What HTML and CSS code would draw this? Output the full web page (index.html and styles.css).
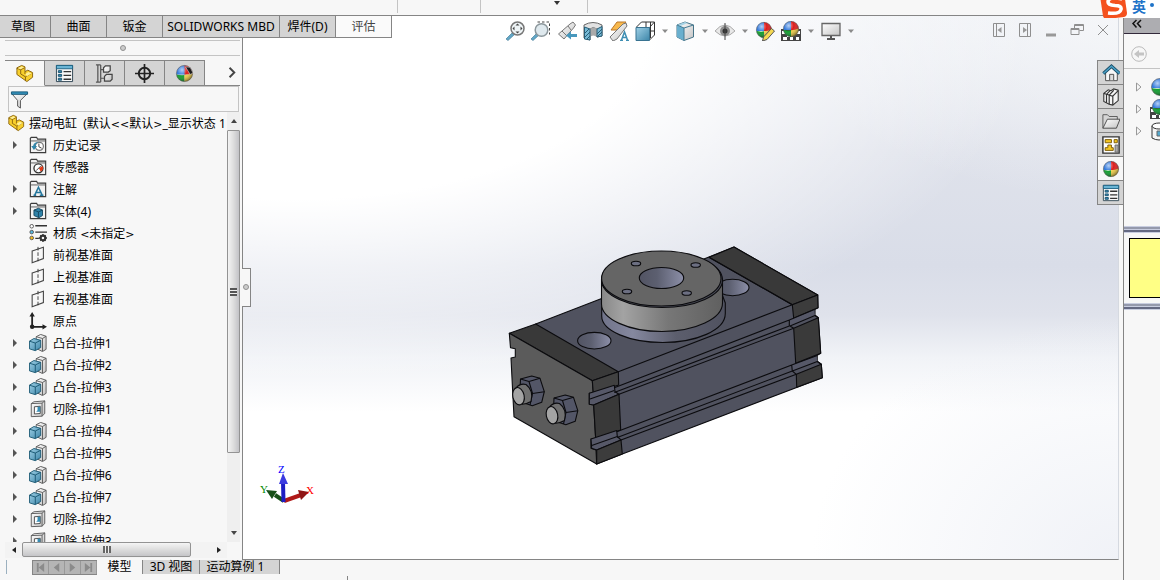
FILE: index.html
```html
<!DOCTYPE html>
<html lang="zh-CN">
<head>
<meta charset="utf-8">
<title>摆动电缸</title>
<link rel="stylesheet" href="styles.css">
</head>
<body>
<svg class="defs" aria-hidden="true">
  <defs>
    <linearGradient id="gBlue" x1="0" y1="0" x2="1" y2="1"><stop offset="0" stop-color="#9fd0e6"/><stop offset="1" stop-color="#3d86a9"/></linearGradient>
    <linearGradient id="gGrey" x1="0" y1="0" x2="1" y2="1"><stop offset="0" stop-color="#fff"/><stop offset="1" stop-color="#c4c4c4"/></linearGradient>
    <linearGradient id="gRim"><stop offset="0" stop-color="#888"/><stop offset=".18" stop-color="#a3a3a3"/><stop offset=".55" stop-color="#777"/><stop offset="1" stop-color="#606060"/></linearGradient>
    <linearGradient id="gBase"><stop offset="0" stop-color="#71748a"/><stop offset=".25" stop-color="#85889f"/><stop offset=".6" stop-color="#5c5e6d"/><stop offset="1" stop-color="#505260"/></linearGradient>
    <linearGradient id="gHole"><stop offset="0" stop-color="#525463"/><stop offset=".4" stop-color="#5c5f70"/><stop offset="1" stop-color="#8c8fa8"/></linearGradient>
    <radialGradient id="gShine" cx=".35" cy=".28" r=".75"><stop offset="0" stop-color="#fff" stop-opacity=".65"/><stop offset=".45" stop-color="#fff" stop-opacity="0"/><stop offset="1" stop-color="#000" stop-opacity=".45"/></radialGradient>
    <clipPath id="ballClip"><circle cx="10" cy="10" r="8.5"/></clipPath>
  </defs>
  <symbol id="part" viewBox="0 0 20 20"><path d="M2 7V4l5-2.500 3.500 1.500v5l3-1.500 5 2.500v5l-6 4.500L2 11Z" fill="#f8cf2c" stroke="#8a6410"/><path d="M2 4.500 6 6v4.500l5 3 6-3.500M6 6l4-2M11 13.500V18M10.500 8v2.500" fill="none" stroke="#8a6410"/><path d="M3 4.500 7 2.500l2.500 1-3.500 2ZM11 10.500l3-2 3.500 1.500-5 3Z" fill="#fff09a"/></symbol>
  <symbol id="props" viewBox="0 0 20 20"><path d="M1.500 1.500h17v17h-17Z" fill="#f8f8f8" stroke="#2e4552"/><path d="M1.500 1.500h17V5h-17Z" fill="#6ab4d4" stroke="#1d6384"/><path d="M3.500 7h3.500v2H3.500ZM3.500 11h3.500v2H3.500ZM3.500 15h3.500v2H3.500Z" fill="#3a8cb4" stroke="#17516f"/><path d="M9 8h8M9 12h8M9 16h8" stroke="#333" stroke-width="1.500"/></symbol>
  <symbol id="config" viewBox="0 0 20 20"><path d="M3 1v18M1 1h5M1 19h5M6 1v18M6 6h4M6 15h4" fill="none" stroke="#555" stroke-width="1.300"/><path d="M9 4l2-2h5v5l-2 1.500H9ZM10 13l2-2h6v5l-2 2h-6Z" fill="url(#gGrey)" stroke="#444" stroke-width="1.300"/></symbol>
  <symbol id="target" viewBox="0 0 20 20"><circle cx="10" cy="10" r="6" fill="none" stroke="#222" stroke-width="2"/><path d="M10 0v20M0 10h20" stroke="#222" stroke-width="1.800"/></symbol>
  <symbol id="ball" viewBox="0 0 20 20"><g clip-path="url(#ballClip)"><path d="M0 0h11v11H0Z" fill="#3078dc"/><path d="M10 0h10v11H10Z" fill="#dc1c1c"/><path d="M0 10.500q5 2 10 1V20H0Z" fill="#0c9c2a"/><path d="M10 11.500q5 0 10-3V20H10Z" fill="#f2cf45"/></g><circle cx="10" cy="10" r="8.500" fill="url(#gShine)" stroke="#555" stroke-width=".6"/></symbol>
  <symbol id="display" viewBox="0 0 20 20"><use href="#ball" width="20" height="20"/><path d="m11 3 5 8 3-1.500-3-6Z" fill="#1c1c1c" stroke="#ddd" stroke-width=".6"/></symbol>
  <symbol id="funnel" viewBox="0 0 20 20"><path d="M2 4l6 7v6l3 2v-8l7-7Z" fill="url(#gGrey)" stroke="#555"/><path d="M1.500 2h17v2.500h-17Z" fill="#3696c0" stroke="#175777"/></symbol>
  <symbol id="folder" viewBox="0 0 20 20"><path d="M1.500 18.500v-16l1-1h6l1 2h9v15Z" fill="#f2f2f2" stroke="#3c3c3c" stroke-width="1.300"/><path d="M1.500 5.500h17" stroke="#555"/></symbol>
  <symbol id="history" viewBox="0 0 20 20"><use href="#folder" width="20" height="20"/><circle cx="11.500" cy="11.500" r="4.500" fill="#fff" stroke="#777" stroke-width="1.300"/><path d="M11 8.500v3.500l3 1.500" fill="none" stroke="#333"/><path d="M2.500 11h2q1-4 6-4.500-3.500 2-3.500 4.500h2l-3.500 4.500Z" fill="#3087ac"/></symbol>
  <symbol id="sensor" viewBox="0 0 20 20"><use href="#folder" width="20" height="20"/><circle cx="10.500" cy="11.500" r="5" fill="#fff" stroke="#333" stroke-width="1.500"/><path d="M11 11.500 15 9q2 4-2 6Z" fill="#e23a16"/><path d="m8 14 5-5" stroke="#333"/></symbol>
  <symbol id="notes" viewBox="0 0 20 20"><use href="#folder" width="20" height="20"/><path d="M5 17h3M12 17h4M6.500 16.500 10.500 8l4 8.500M8 14h5" fill="none" stroke="#26779d" stroke-width="1.700"/></symbol>
  <symbol id="solids" viewBox="0 0 20 20"><use href="#folder" width="20" height="20"/><path d="m5.500 9 5-2 4.500 2v6l-4 2.500-5.500-2.500Z" fill="#2f83a9" stroke="#14455d"/><path d="m5.500 9 5 2 4.500-2M10.500 11v6" fill="none" stroke="#14455d"/></symbol>
  <symbol id="material" viewBox="0 0 20 20"><path d="M7 2h13M7 9h13M7 16h4" stroke="#333" stroke-width="1.600"/><g stroke="#555"><circle cx="3" cy="2.500" r="2" fill="#fff"/><circle cx="3" cy="9" r="2" fill="#55b7df"/><circle cx="3" cy="15.500" r="2" fill="#f4bd20"/></g><circle cx="15.500" cy="15.500" r="2.600" fill="none" stroke="#333" stroke-width="2.400"/><path d="M15.500 11v2M15.500 18v2M11 15.500h2M18 15.500h2M12.500 12.500l1 1M17.500 17.500l1 1M18.500 12.500l-1 1M13.500 17.500l-1 1" stroke="#333" stroke-width="1.500"/></symbol>
  <symbol id="plane" viewBox="0 0 20 20"><path d="M3.500 5.500 16 1.500v12.500L3.500 18.500Z" fill="none" stroke="#444" stroke-width="1.200"/><path d="M10 1v18" stroke="#333" stroke-dasharray="4 2"/></symbol>
  <symbol id="origin" viewBox="0 0 20 20"><path d="M3.500 3v13.500H17" fill="none" stroke="#222" stroke-width="2"/><path d="m3.500 0 3 5h-6ZM20 16.500l-5 3v-6Z" fill="#222"/><circle cx="3.500" cy="16.500" r="2.500" fill="#222"/></symbol>
  <symbol id="boss" viewBox="0 0 20 20"><path d="m8 3 5-2.500 6 2v14.500l-4 2.500L8 16Z" fill="url(#gGrey)" stroke="#555"/><path d="m8 3 7 2 4-2.500M15 5v14" fill="none" stroke="#555"/><path d="m.5 8 5-3 7.500 2v8L7 18.500l-6.500-2Z" fill="url(#gBlue)" stroke="#16556f"/><path d="m.5 8 6.500 2 6-3M7 10v8" fill="none" stroke="#16556f"/></symbol>
  <symbol id="cut" viewBox="0 0 20 20"><path d="m2.500 4 3-2 12-1v14l-3 3-12 .500Z" fill="url(#gGrey)" stroke="#555"/><path d="m2.500 4 12-.5V18M14.500 3.500l3-2.500" fill="none" stroke="#555"/><path d="M6 7.500 12.500 7v8L6 15.500Z" fill="#fff" stroke="#444"/><path d="M9.500 7.500h3v5.500H8l1.500-1.500Z" fill="#358bb2"/></symbol>
  <symbol id="zoomfit" viewBox="0 0 20 20"><path d="m1 18 7-7 2 2-7 6.500Z" fill="#62a7c7" stroke="#497f99" stroke-width=".7"/><circle cx="12.500" cy="7.500" r="6.500" fill="#eef4f6" stroke="#777" stroke-width="1.500"/><path d="m12.500 2.500 2 2h-4ZM12.500 12.500l2-2h-4ZM7.500 7.500l2-2v4ZM17.500 7.500l-2-2v4Z" fill="#444"/></symbol>
  <symbol id="zoomarea" viewBox="0 0 20 20"><path d="M6.500 1h12v12.500" fill="none" stroke="#444" stroke-dasharray="2.500 2"/><path d="m0 18 6-6 2 2-6 5.500Z" fill="#62a7c7" stroke="#497f99" stroke-width=".7"/><circle cx="10.500" cy="9" r="6.300" fill="#dfe9ee" stroke="#8c979c" stroke-width="1.500"/></symbol>
  <symbol id="prev" viewBox="0 0 20 20"><path d="M1.500 13 13 3l3-2 2.500 3-2 3L7 18Z" fill="url(#gGrey)" stroke="#777"/><path d="m11 5 3 4M5 10l5 5" stroke="#777"/><path d="m9 14.500 5-4v2.500h6v3h-6v2.500Z" fill="#4898bd"/></symbol>
  <symbol id="section" viewBox="0 0 20 20"><path d="M1 4q9-5 18 0v11l-5 1V8q-4-3-7 0v11l-6-2Z" fill="#e2e2e2" stroke="#666"/><path d="M7 8q4-3 7 0v8q-4-3-7 0Z" fill="#aaa"/><path d="m1.500 6 5.500 2v11l-5.500-1ZM14 8l5-2.500V15l-5 1Z" fill="#77bad6" stroke="#285d76"/><path d="m2 12 4-4M2 16l5-5M4 18l3-3M14 13l5-5M14 16l5-5" stroke="#285d76"/></symbol>
  <symbol id="annot" viewBox="0 0 20 20"><path d="M8 1h9l-5 6h4L5 15l3-6H2Z" fill="#f7b84c" stroke="#bb7628"/><path d="M1 16 14 3l3-1 1 3L8 18l-4 2Z" fill="url(#gGrey)" stroke="#777"/><path d="M11 19.500h3M17 19.500h3M12.500 19l3-8 3 8M13 16.500h5" fill="none" stroke="#3f8fb3" stroke-width="1.500"/></symbol>
  <symbol id="orient" viewBox="0 0 20 20"><path d="m1.500 6 5-5h13v13l-5 5M11 1v5M1.500 6.500h13M14.500 6.500l5-5.500M14.500 10h5M15.500 1v16" fill="none" stroke="#333"/><path d="M1 6.500h13.500v13H1Z" fill="url(#gBlue)" stroke="#397391"/></symbol>
  <symbol id="style" viewBox="0 0 20 20"><path d="m2 4 8-3 8.500 3v12L9 19.500 2 16Z" fill="url(#gGrey)" stroke="#467488"/><path d="m2 4 7 3v12.500L2 16Z" fill="#69afce"/><path d="m2 4 8-3 2.500 1L5 5.200Z" fill="#a6d2e4"/><path d="M2 4l7 3 9.500-3M9 7v12.500" fill="none" stroke="#457b93"/></symbol>
  <symbol id="eye" viewBox="0 0 20 20"><path d="M0 10q10-12 20 0-10 10-20 0Z" fill="#e8e8e8" stroke="#aaa"/><circle cx="10" cy="10" r="5" fill="#8c8c8c"/><circle cx="10" cy="10" r="2.500" fill="#333"/><path d="M10 2v17" stroke="#444"/></symbol>
  <symbol id="appear" viewBox="0 0 20 20"><use href="#ball" width="18" height="18"/><path d="m8.500 16 8-8.500 3 2.500-7.500 8.500-4.500 1.500Z" fill="#f6d951" stroke="#555"/></symbol>
  <symbol id="scene" viewBox="0 0 20 20"><path d="M0 8h20v12H0Z" fill="#444"/><path d="M2 16h4v3H2ZM9 16h3v3H9ZM15 16h3v3h-3ZM1 10h3v3H1ZM16 10h3v3h-3ZM6 14h3v2H6Z" fill="#fff"/><use href="#ball" x="1" y="-1" width="18" height="18"/></symbol>
  <symbol id="monitor" viewBox="0 0 20 20"><path d="M1 2.500h18v12H1Z" fill="url(#gGrey)" stroke="#666" stroke-width="1.300"/><path d="M10 15v3M6 18h8" stroke="#555" stroke-width="2"/></symbol>
  <symbol id="caret" viewBox="0 0 8 20"><path d="M1 8.500h6l-3 3.500Z"/></symbol>
  <symbol id="home" viewBox="0 0 20 20"><path d="M4 9v9.500h13V9l-6.500-6Z" fill="#f7f7f7" stroke="#444"/><path d="M8.500 18V11.500H13V18" fill="#ddd" stroke="#444"/><path d="m1.500 10.500 9-8 9 8" fill="none" stroke="#1b4e68" stroke-width="3.600"/><path d="m1.500 10.500 9-8 9 8" fill="none" stroke="#4ba0c5" stroke-width="1.700"/></symbol>
  <symbol id="books" viewBox="0 0 20 20"><path d="m2 6 5-4 3 1 3-2 5 1.500V14l-6 5-4-1-6-3Z" fill="#f4f4f4" stroke="#333" stroke-width="1.200"/><path d="m2 6 3 1v9.500M5 7l4-4M5.500 7 8 8v10M8 8l5-5.500M8 8l4 1v10M12 9l6-6" fill="none" stroke="#333" stroke-width="1.300"/></symbol>
  <symbol id="open" viewBox="0 0 20 20"><path d="M1 18V3h5l2 2h9v5" fill="#d6d6d6" stroke="#555"/><path d="m1 18 5-10h14l-4 10Z" fill="url(#gGrey)" stroke="#444"/></symbol>
  <symbol id="palette" viewBox="0 0 20 20"><path d="M1 1h18v18H1Z" fill="#fff" stroke="#333" stroke-width="1.600"/><path d="M3.500 4h7v3.500h-7ZM13.500 4H17v3.500h-3.500ZM3.500 13h3v-3h4v3h2v3h-9Z" fill="#f5c722" stroke="#745500"/><path d="M14.500 10H18v8h-3.500Z" fill="#aaa" stroke="#666"/></symbol>
  <symbol id="drum" viewBox="0 0 20 20"><path d="M2 5v12q7 4 14 0V5" fill="#f5f5f5" stroke="#333"/><ellipse cx="9" cy="5" rx="7" ry="3" fill="#fff" stroke="#333"/><path d="M7 10h6v5H7Z" fill="#54a9ce" stroke="#666"/></symbol>
</svg>

<div class="app">
  <header class="ribbon">
    <span class="ribbon-group"></span>
    <span class="ribbon-group narrow"></span>
    <span class="ribbon-group wide"><svg class="mini-caret" viewBox="0 0 6 4"><path d="M0 0h6L3 4Z"/></svg></span>
  </header>

  <nav class="command-tabs">
    <button class="sketch">草图</button><button>曲面</button><button>钣金</button><button class="mbd">SOLIDWORKS MBD</button><button>焊件(D)</button><button class="active">评估</button>
  </nav>

  <aside class="side">
    <div class="grip"><i class="dot"></i></div>
    <div class="side-tabs">
      <button class="active" aria-label="设计树"><svg><use href="#part"/></svg></button>
      <button aria-label="属性"><svg><use href="#props"/></svg></button>
      <button aria-label="配置"><svg><use href="#config"/></svg></button>
      <button aria-label="尺寸"><svg><use href="#target"/></svg></button>
      <button aria-label="外观"><svg><use href="#display"/></svg></button>
      <button class="more" aria-label="更多"><svg viewBox="0 0 20 20"><path d="m9 5 5 5-5 5"/></svg></button>
    </div>
    <label class="filter"><svg><use href="#funnel"/></svg><input type="text" aria-label="过滤"></label>
    <div class="tree-area">
      <ul class="tree">
        <li class="root"><svg><use href="#part"/></svg><span>摆动电缸&nbsp; (默认<b>&lt;&lt;</b>默认<b>&gt;</b>_显示状态 1</span></li>
        <li class="has"><svg><use href="#history"/></svg><span>历史记录</span></li>
        <li><svg><use href="#sensor"/></svg><span>传感器</span></li>
        <li class="has"><svg><use href="#notes"/></svg><span>注解</span></li>
        <li class="has"><svg><use href="#solids"/></svg><span>实体(4)</span></li>
        <li><svg><use href="#material"/></svg><span>材质 <b>&lt;</b>未指定<b>&gt;</b></span></li>
        <li><svg><use href="#plane"/></svg><span>前视基准面</span></li>
        <li><svg><use href="#plane"/></svg><span>上视基准面</span></li>
        <li><svg><use href="#plane"/></svg><span>右视基准面</span></li>
        <li><svg><use href="#origin"/></svg><span>原点</span></li>
        <li class="has"><svg><use href="#boss"/></svg><span>凸台-拉伸1</span></li>
        <li class="has"><svg><use href="#boss"/></svg><span>凸台-拉伸2</span></li>
        <li class="has"><svg><use href="#boss"/></svg><span>凸台-拉伸3</span></li>
        <li class="has"><svg><use href="#cut"/></svg><span>切除-拉伸1</span></li>
        <li class="has"><svg><use href="#boss"/></svg><span>凸台-拉伸4</span></li>
        <li class="has"><svg><use href="#boss"/></svg><span>凸台-拉伸5</span></li>
        <li class="has"><svg><use href="#boss"/></svg><span>凸台-拉伸6</span></li>
        <li class="has"><svg><use href="#boss"/></svg><span>凸台-拉伸7</span></li>
        <li class="has"><svg><use href="#cut"/></svg><span>切除-拉伸2</span></li>
        <li class="has"><svg><use href="#cut"/></svg><span>切除-拉伸3</span></li>
      </ul>
      <div class="vbar"><i class="arrow up"></i><div class="vtrack"><div class="vthumb"><i></i></div></div><i class="arrow down"></i></div>
      <div class="hbar"><i class="arrow left"></i><div class="htrack"><div class="hthumb"><i></i></div></div><i class="arrow right"></i></div>
    </div>
    <button class="splitter" aria-label="折叠"><i class="dot"></i></button>
  </aside>

  <main class="viewport">
    <svg class="model" viewBox="500 240 330 230" role="img" aria-label="模型">
      <g stroke="#0b0b0e" stroke-width="1.100" stroke-linejoin="round">
        <path d="M535.700 324 709 257 734 247 817.700 295l.3 12.700-3 1.500v6l3.300 2.500 2.400 35.600-3.500 2v6l4.100 3 1 13.400L622.300 454l-25.600 10Z" fill="#50525f"/>
        <path d="m709 257.300 25-10.300 83.700 48-25.400 9.700Z" fill="#393939"/>
        <path d="m792.300 304.700 25.400-9.700.3 12.700-24.300 10.600Z" fill="#3c3c3c"/>
        <path d="m789.300 320 25-10 .7 6-25 10Z" fill="#565868" stroke="none"/>
        <path d="m793.700 328.300 24.600-10.600 2.400 35.600-25 10Z" fill="#3a3a3a"/>
        <path d="m791.700 365 25-9 .5 6-25 9Z" fill="#565868" stroke="none"/>
        <path d="m796.300 374.300 25-10 1 13.400-25.600 9.600Z" fill="#3c3c3c"/>
        <path d="M509.300 333.300 535.700 324l82.600 47.700-26 9Z" fill="#393939"/>
        <path d="m509.300 333.300 83 47.400 1 12.600h-4v11l4.400.700 2 34.300-4.700-.3v9.300l5 1.700.7 14-82.700-47.300-1.300-24.700-1.700-34 4.300-1v-8.300l-4.800-1Z" fill="#5b5b5b"/>
        <path d="m592.300 380.700 26-9 .4 13.300-25.400 8.300Z" fill="#414141"/>
        <path d="m589.300 393.300 25-8 .7 6.500 4 2.500-25.300 10.700-4.400-.7Z" fill="#565868"/>
        <path d="m593.700 405 25.300-10.700 1.700 35.700-25 9.300Z" fill="#393939"/>
        <path d="m591 439 25.700-8.500.6 6 3.700 3.500-24.300 10-5-1.700Z" fill="#565868"/>
        <path d="m596.700 450 24.300-10 1.300 14-25.600 10Z" fill="#3c3c3c"/>
        <g fill="none"><path d="m618.300 371.700 174-67M614.300 387.700l175-67.700v6l-175 66.500M619 394.300l174.700-66M590 399l24.300-8.500M616.700 431.700l175-66.700.6 6-175 66.500M621 440l175.300-65.700M591.700 445.500l25.600-9M789.300 320l25-10.500M790 326l25-10.500 3.300 2.200M791.700 365l25.500-9.500M792.300 371l25-9.500 4 2.800M790 326l3.700 2.300M792.300 371l4 3.300M709 257.300l83.300 47.400"/></g>
        <ellipse cx="594.300" cy="340.700" rx="16.700" ry="8.300" fill="url(#gHole)"/>
        <ellipse cx="732.500" cy="287.500" rx="16.500" ry="8.200" fill="url(#gHole)"/>
        <path d="M601.700 306v10c0 15 28 26.500 61 26.500s62.600-12 62.600-29V303l-3-8Z" fill="url(#gBase)"/>
        <path d="M601.500 279v25c0 15 27 27.500 60.500 27.500s60.500-13 60.500-28.500V279Z" fill="url(#gRim)"/>
        <ellipse cx="662" cy="280" rx="60.500" ry="27.500" fill="#4b4d59"/>
        <ellipse cx="661.300" cy="278.500" rx="59.700" ry="27.500" fill="#656565"/>
        <ellipse cx="661.500" cy="278" rx="22.200" ry="10.500" fill="url(#gHole)"/>
        <g fill="#6c6f82"><ellipse cx="636" cy="263.500" rx="4.700" ry="2.300"/><ellipse cx="627" cy="291.500" rx="4.700" ry="2.300"/><ellipse cx="695.700" cy="265" rx="4.700" ry="2.300"/><ellipse cx="686.700" cy="293" rx="4.700" ry="2.300"/></g>
        <g id="bolt"><path d="m520.500 379 11.200-3 8.300 2.300 4.300 13.400-2.600 10.600-9.400 3.400-7.300-2.400-5-12Z" fill="#535667"/><path d="m520.500 379 8.500 2.500 3.500 12-2.500 11.500M529 381.500l11-3.200M532.500 393.500l11.800-1.800" fill="none"/><path d="M516 388q4-5 10-3.500 8 6 5 17-5 3-10 3Z" fill="#707070"/><ellipse cx="518.500" cy="396.200" rx="5.700" ry="8.800" fill="#a4a4a4" transform="rotate(-12 518.500 396.200)"/></g>
        <use href="#bolt" x="33.500" y="19"/>
      </g>
    </svg>
    <div class="viewbar">
      <div class="tools">
        <button aria-label="整屏显示"><svg><use href="#zoomfit"/></svg></button>
        <button aria-label="局部放大"><svg><use href="#zoomarea"/></svg></button>
        <button aria-label="上一视图"><svg><use href="#prev"/></svg></button>
        <button aria-label="剖面视图"><svg><use href="#section"/></svg></button>
        <button aria-label="动态注解"><svg><use href="#annot"/></svg></button>
        <button aria-label="视图定向"><svg><use href="#orient"/></svg></button>
        <svg class="caret"><use href="#caret"/></svg>
        <button aria-label="显示样式"><svg><use href="#style"/></svg></button>
        <svg class="caret"><use href="#caret"/></svg>
        <button aria-label="隐藏显示"><svg><use href="#eye"/></svg></button>
        <svg class="caret"><use href="#caret"/></svg>
        <button aria-label="编辑外观"><svg><use href="#appear"/></svg></button>
        <button aria-label="应用布景"><svg><use href="#scene"/></svg></button>
        <svg class="caret"><use href="#caret"/></svg>
        <button aria-label="视图设定"><svg><use href="#monitor"/></svg></button>
        <svg class="caret"><use href="#caret"/></svg>
      </div>
      <div class="window-controls">
        <button aria-label="左侧"><svg viewBox="0 0 14 14"><path d="M1.500.5h11v13h-11ZM4.500.5v13"/><path class="solid" d="M9.500 4v6l-4-3Z"/></svg></button>
        <button aria-label="右侧"><svg viewBox="0 0 14 14"><path d="M1.500.5h11v13h-11ZM9.500.5v13"/><path class="solid" d="M5 4v6l4-3Z"/></svg></button>
        <button aria-label="最小化"><svg viewBox="0 0 14 14"><path class="solid" d="M2 10.500h10v3H2Z"/></svg></button>
        <button aria-label="还原"><svg viewBox="0 0 14 14"><path d="M1 5.500h8v6H1ZM4.500 5V1.500h9v6H9.500M4.500 2.500h9M1 6.500h8"/></svg></button>
        <button aria-label="关闭"><svg viewBox="0 0 14 14"><path d="m2 2 10 10M12 2 2 12"/></svg></button>
      </div>
    </div>
    <svg class="triad" viewBox="258 460 60 46" role="img" aria-label="坐标系">
      <path d="m284 501 17-6" stroke="#b01818" stroke-width="4"/><path d="m298 490 11 2-8 8Z" fill="#8e1616"/>
      <path d="m284 501-9-6" stroke="#174f17" stroke-width="4"/><path d="m266 490 11 1-5 8Z" fill="#174f17"/>
      <path d="M283.500 502 283 482" stroke="#1d1dc4" stroke-width="4"/><path d="m283 473 5 11h-9Z" fill="#3b3be0"/>
      <text x="278" y="473" fill="#00f">Z</text><text x="260" y="493" fill="#080">Y</text><text x="306" y="494" fill="#f00">X</text>
    </svg>
  </main>

  <aside class="task">
    <div class="task-tabs">
      <button aria-label="资源"><svg><use href="#home"/></svg></button>
      <button aria-label="设计库"><svg><use href="#books"/></svg></button>
      <button aria-label="文件"><svg><use href="#open"/></svg></button>
      <button aria-label="视图调色板"><svg><use href="#palette"/></svg></button>
      <button class="active" aria-label="外观布景"><svg><use href="#ball"/></svg></button>
      <button aria-label="自定义属性"><svg><use href="#props"/></svg></button>
    </div>
    <div class="task-head"><svg viewBox="0 0 10 8"><path d="M4.500 0 1 3.500l3.500 4M9 0 5.500 3.500l3.500 4"/></svg></div>
    <div class="task-nav"><svg viewBox="0 0 16 16"><circle cx="8" cy="8" r="7.300"/><path class="solid" d="m3 8 5-4v2.500h5v3H8V12Z"/></svg></div>
    <ul class="task-list">
      <li><svg class="expand" viewBox="0 0 6 10"><path d="M.5 1v8L5 5Z"/></svg><svg><use href="#ball"/></svg></li>
      <li><svg class="expand" viewBox="0 0 6 10"><path d="M.5 1v8L5 5Z"/></svg><svg><use href="#scene"/></svg></li>
      <li><svg class="expand" viewBox="0 0 6 10"><path d="M.5 1v8L5 5Z"/></svg><svg><use href="#drum"/></svg></li>
    </ul>
    <div class="preview"><div class="swatch"></div></div>
  </aside>

  <footer class="bottom">
    <div class="playback"><button aria-label="首页"><svg viewBox="0 0 12 12"><path d="M2 1h2v10H2ZM10 1v10L4 6Z"/></svg></button><button aria-label="上一页"><svg viewBox="0 0 12 12"><path d="M9 1v10L3 6Z"/></svg></button><button aria-label="下一页"><svg viewBox="0 0 12 12"><path d="M3 1v10l6-5Z"/></svg></button><button aria-label="末页"><svg viewBox="0 0 12 12"><path d="M8 1h2v10H8ZM2 1v10l6-5Z"/></svg></button></div>
    <nav class="doc-tabs"><button class="active">模型</button><button>3D 视图</button><button class="motion">运动算例 1</button></nav>
    <i class="status-mark"></i>
  </footer>

  <div class="ime">
    <svg viewBox="0 0 28 20"><path d="M0-4 24-8 27 13q0 3-3 4L7 19q-3 0-4-3Z" fill="#f4511e"/><path d="M22-1Q8-4 8 2q0 3 7 3.500 7 0 6 4-1 5-13 3.500" fill="none" stroke="#fff" stroke-width="3.500"/></svg>
    <span>英</span><i></i>
  </div>
</div>
</body>
</html>
```

FILE: styles.css
```css
* { box-sizing: border-box; }
body { margin: 0; font: 12px/22px "Noto Sans", "Noto Sans CJK SC", sans-serif; color: #000; background: #f7f7f7; }
button { margin: 0; padding: 0; border: 0; background: none; font: inherit; color: inherit; }
ul { margin: 0; padding: 0; list-style: none; }
svg { display: block; flex: none; }
.defs { position: absolute; width: 0; height: 0; }

.app { position: relative; display: grid; grid-template: 15px 23px minmax(0, 1fr) 20px / 243px minmax(0, 1fr) 41px; height: 100vh; overflow: hidden; }

.ribbon { grid-area: 1 / 1 / 2 / -1; display: flex; border-bottom: 1px solid #858585; height: 16px; }
.ribbon-group { width: 398px; height: 13px; border-right: 1px solid #c4c4c4; }
.ribbon-group.narrow { width: 83px; }
.ribbon-group.wide { width: 107px; padding: 1px 0 0 73px; }
.mini-caret { width: 6px; height: 4px; fill: #333; }

.command-tabs { grid-area: 2 / 1 / 3 / 3; z-index: 2; justify-self: start; display: flex; border-top: 1px solid #858585; border-bottom: 1px solid #858585; }
.command-tabs button { width: 56px; height: 21px; background: #d4d4d4; border-right: 1px solid #858585; white-space: nowrap; }
.command-tabs .sketch { width: 51px; padding-right: 4px; }
.command-tabs .mbd { width: 117px; }
.command-tabs .active { background: #fafafa; color: #444; }

.side { grid-area: 3 / 1 / 4 / 2; position: relative; display: flex; flex-direction: column; padding: 2px 2px 2px 5px; border-right: 1px solid #858585; min-height: 0; }
.grip { height: 16px; border-top: 1px solid #c4c4c4; border-bottom: 1px solid #c4c4c4; display: grid; place-items: center; flex: none; }
.dot { width: 6px; height: 6px; border: 1px solid #919191; border-radius: 50%; background: #ccc; }
.side-tabs { display: flex; margin-top: 4px; height: 26px; border-bottom: 1px solid #858585; flex: none; }
.side-tabs button { width: 40px; height: 26px; border: 1px solid #858585; border-left: 0; background: #d4d4d4; display: grid; place-items: center; }
.side-tabs svg { width: 19px; height: 19px; }
.side-tabs .active { background: #f7f7f7; border-bottom-color: #f7f7f7; }
.side-tabs .more { flex: 1; height: 24px; border: 0; background: none; justify-items: end; }
.more path { fill: none; stroke: #444; stroke-width: 2; }
.filter { display: flex; align-items: center; margin: 0 1px 0 3px; padding-left: 1px; height: 26px; border: 1px solid #c4c4c4; flex: none; }
.filter svg { width: 19px; height: 19px; }
.filter input { flex: 1; min-width: 0; border: 0; background: none; outline: 0; }

.tree-area { flex: 1; min-height: 0; display: grid; grid-template: minmax(0, 1fr) 16px / minmax(0, 1fr) 13px; }
.tree { overflow: hidden; }
.tree li { display: flex; align-items: center; gap: 6px; height: 22px; padding-left: 24px; white-space: nowrap; position: relative; }
.tree svg { width: 18px; height: 18px; }
.tree span { padding-top: 2px; }
.tree b { font: 11px/12px "DejaVu Sans", sans-serif; }
.tree .root { padding-left: 2px; gap: 4px; }
.tree .has::before { content: ""; position: absolute; left: 8px; top: 7px; border: solid transparent; border-width: 4px 0 4px 4px; border-left-color: #555; }
.vbar { display: flex; flex-direction: column; background: #efefef; }
.arrow { width: 13px; height: 18px; display: grid; place-items: center; flex: none; }
.arrow::before { content: ""; border: 3px solid transparent; }
.up::before { border-top: 0; border-bottom: 4px solid #444; }
.down::before { border-bottom: 0; border-top: 4px solid #444; }
.left::before { border-left: 0; border-right: 4px solid #222; }
.right::before { border-right: 0; border-left: 4px solid #222; }
.vtrack { flex: 1; min-height: 0; }
.vthumb { height: 82%; border: 1px solid #939393; border-radius: 1px; background: linear-gradient(90deg, #f3f3f3, #ddd 50%, #c2c2c6); display: grid; place-items: center; }
.vthumb i { width: 7px; height: 8px; background: repeating-linear-gradient(#555 0 2px, #eee 2px 3px); }
.hbar { display: flex; background: #f3f3f3; grid-column: 1; }
.hbar .arrow { width: 17px; height: 16px; }
.htrack { flex: 1; }
.hthumb { width: 90%; height: 15px; border: 1px solid #939393; border-radius: 2px; background: linear-gradient(#f5f5f5, #ddd 50%, #c5c5c8); display: grid; place-items: center; }
.hthumb i { width: 8px; height: 7px; background: repeating-linear-gradient(90deg, #666 0 2px, #eee 2px 3px); }
.splitter { position: absolute; left: 100%; top: 44%; width: 9px; height: 39px; border: 1px solid #858585; border-left: 0; background: #f7f7f7; z-index: 3; display: grid; place-items: center; }

.viewport { grid-area: 2 / 2 / 4 / 3; position: relative; margin-top: 1px; overflow: hidden; border-bottom: 1px solid #858585; border-right: 1px solid #d5d9e0;
  background:
    radial-gradient(ellipse 84% 66% at 6% 2%, #fff 0, #fff 48%, rgba(255,255,255,0) 100%),
    radial-gradient(ellipse 38% 34% at 100% 0, rgba(247,248,250,.8) 0, rgba(247,248,250,0) 100%),
    radial-gradient(ellipse 35% 45% at 100% 100%, #f0f2f7 0, rgba(240,242,247,0) 100%),
    linear-gradient(#eceff4 0, #dfe2eb 25%, #d9dde8 46%, #dfe2eb 55%, #f1f3f7 63%, #fff 73%, #fff 100%); }
.model { position: absolute; left: 257px; top: 224px; width: 330px; height: 230px; }
.triad { position: absolute; left: 15px; bottom: 53px; width: 60px; height: 46px; overflow: visible; font: 11px "Liberation Serif", serif; }
.viewbar { position: relative; display: flex; justify-content: space-between; padding: 5px 8px 0 262px; }
.tools { display: flex; gap: 6px; }
.tools button, .tools button svg { width: 20px; height: 20px; }
.tools .caret { width: 8px; height: 20px; fill: #8b8b8b; }
.window-controls { display: flex; gap: 12px; padding-top: 2px; }
.window-controls button { height: 14px; }
.window-controls svg { width: 14px; height: 14px; fill: none; stroke: #8f8f8f; }
.window-controls .solid, .task-nav .solid { fill: #999; stroke: none; }

.task { grid-area: 2 / 3 / -1 / 4; position: relative; margin-left: 4px; border-left: 1px solid #858585; display: flex; flex-direction: column; z-index: 1; }
.task-head { background: #adadb1; border-bottom: 1px solid #32283a; padding: 5px 8px; height: 19px; }
.task-head svg { width: 10px; height: 8px; overflow: visible; fill: none; stroke: #111; stroke-width: 1.5; }
.task-nav { height: 35px; border-bottom: 1px solid #c4c4c4; padding: 12px 7px; }
.task-nav svg { width: 16px; height: 16px; fill: none; stroke: #bbb; }
.task-nav .solid { fill: #c4c4c4; }
.task-list { padding-top: 7px; overflow: hidden; }
.task-list li { display: flex; align-items: center; height: 22px; padding-left: 12px; gap: 8px; }
.task-list svg { width: 20px; height: 20px; }
.task-list .expand { width: 6px; height: 10px; fill: none; stroke: #999; }
.preview { margin-top: 84px; padding: 5px 0 5px 5px; overflow: hidden; flex: none; }
.preview { border: solid transparent; border-width: 7px 0; background: linear-gradient(#f7f7f7, #f7f7f7) padding-box, repeating-linear-gradient(#c8cde0 0 1px, #9499ac 1px 3px, #c8cde0 3px 4px, #646983 4px 6px, #c8cde0 6px 7px) border-box; }
.swatch { width: 60px; height: 60px; background: #ffff85; border: 1px solid #000; }
.task-tabs { position: absolute; right: 100%; top: 45px; width: 27px; display: flex; flex-direction: column; border: 1px solid #858585; border-bottom: 0; }
.task-tabs button { height: 24px; background: #d4d4d4; border-bottom: 1px solid #858585; display: grid; place-items: center; }
.task-tabs svg { width: 18px; height: 18px; }
.task-tabs .active { background: #f7f7f7; }

.bottom { grid-area: 4 / 1 / 5 / 3; display: flex; align-items: flex-start; margin-left: 6px; padding-left: 26px; }
.bottom::before { content: ""; width: 1px; height: 14px; margin: 0 25px 0 -26px; background: #9bb0bf; }
.playback { display: flex; height: 15px; border: 1px solid #858585; border-right: 0; }
.playback button { width: 16px; height: 13px; background: #b5b5b5; border-right: 1px solid #999; display: grid; place-items: center; }
.playback svg { width: 11px; height: 11px; fill: #8b8b8b; }
.doc-tabs { display: flex; line-height: 12px; }
.doc-tabs button { height: 14px; width: 57px; background: #d4d4d4; border-right: 1px solid #858585; white-space: nowrap; }
.doc-tabs .active { width: 46px; background: #f7f7f7; }
.doc-tabs .motion { width: 80px; padding-right: 8px; }
.status-mark { width: 1px; height: 4px; margin: 16px 0 0 67px; background: #858585; }

.ime { position: absolute; right: 0; top: 0; z-index: 4; width: 60px; height: 18px; display: flex; align-items: flex-start; gap: 4px; overflow: hidden; background: linear-gradient(90deg, transparent 7px, #fff 7px); }
.ime svg { width: 28px; height: 20px; }
.ime span { font-size: 14px; line-height: 14px; color: #1e73c8; font-weight: 700; }
.ime i { width: 4px; height: 4px; margin-top: 3px; border-radius: 50%; background: #1e73c8; flex: none; }
```
